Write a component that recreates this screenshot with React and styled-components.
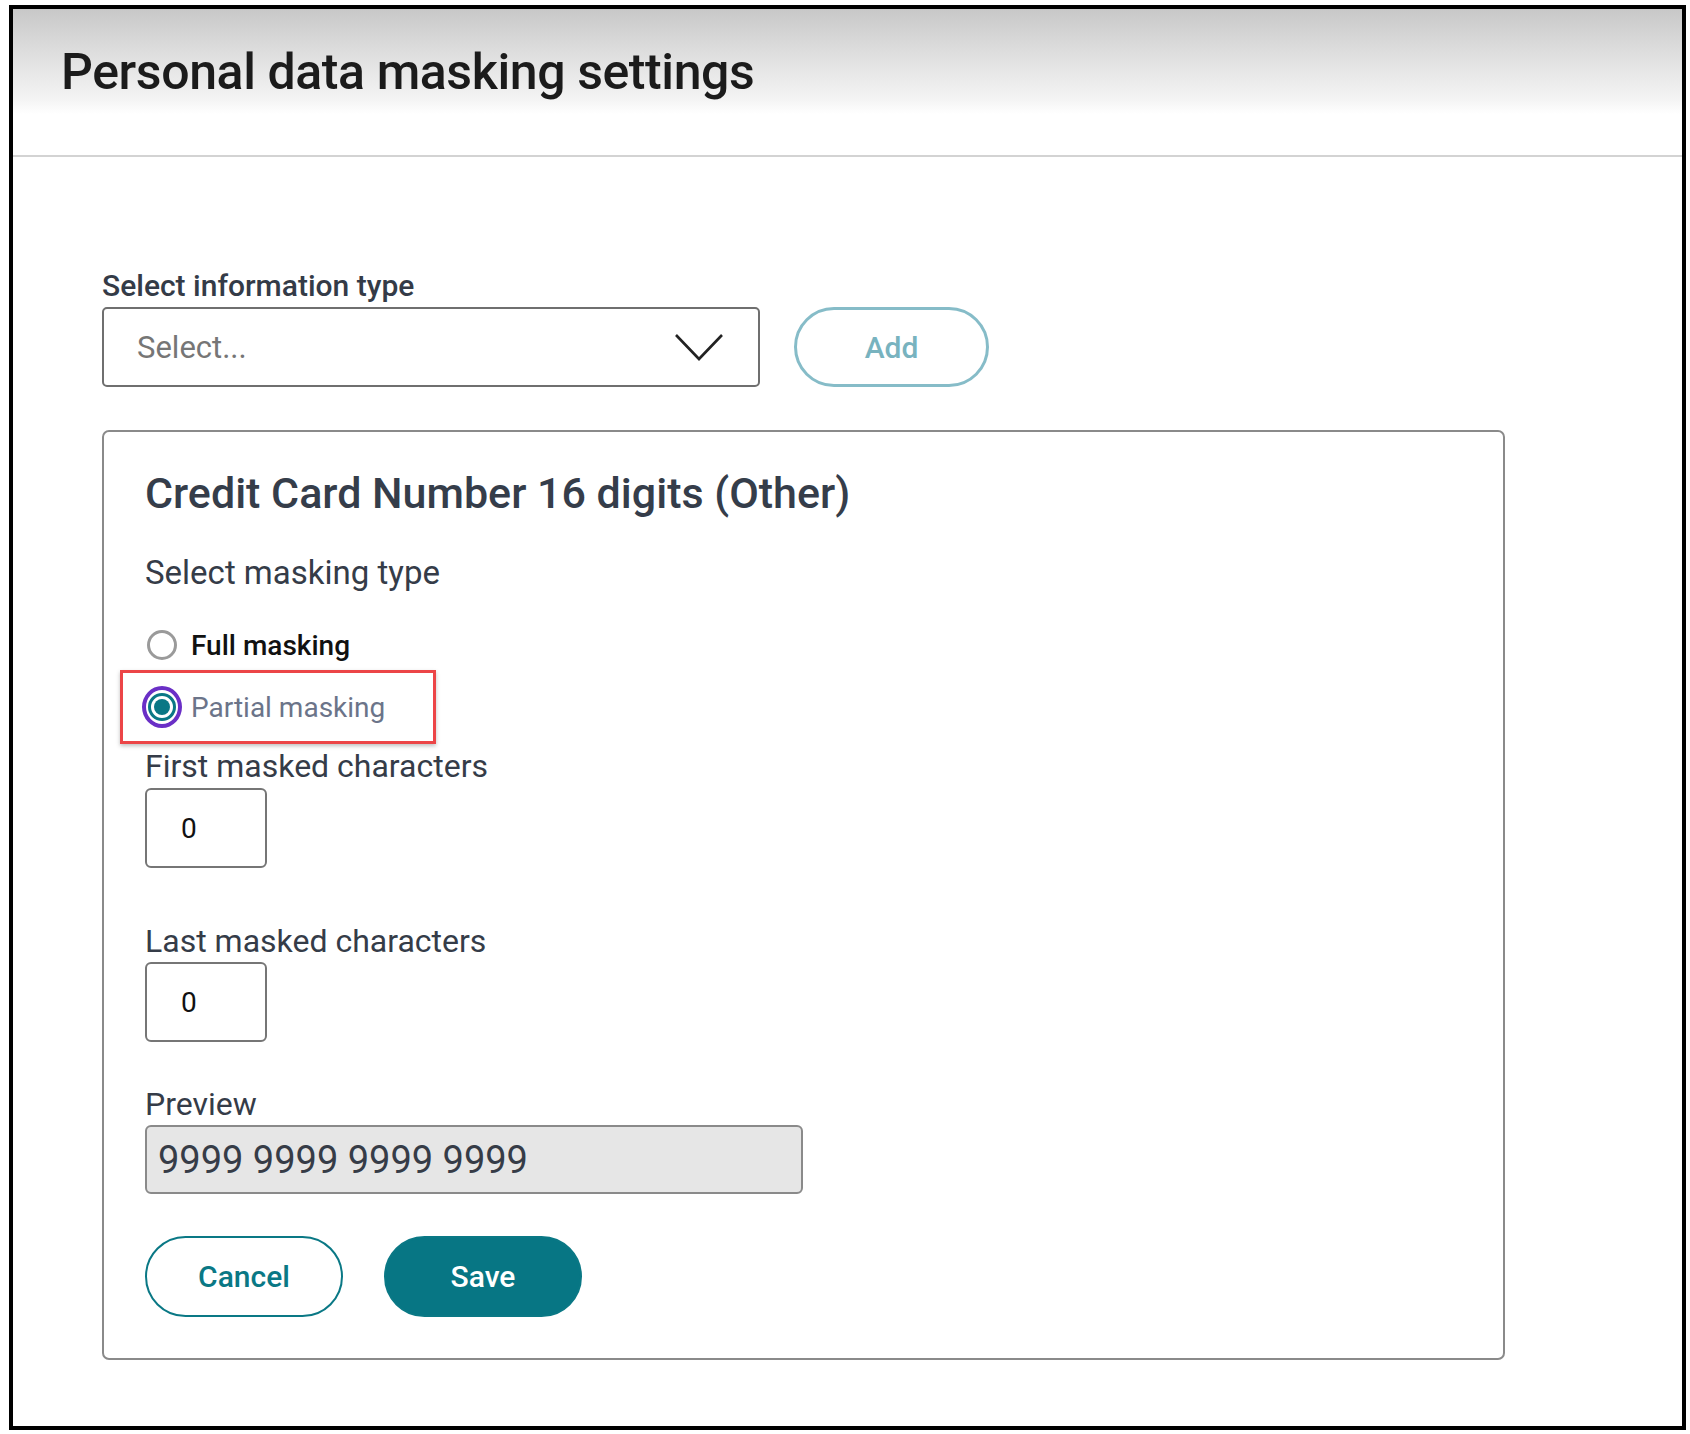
import React from "react";
import styled, { createGlobalStyle } from "styled-components";

const GlobalStyle = createGlobalStyle`
  html, body { margin: 0; padding: 0; background: #ffffff; }
  body { font-family: Roboto, "Liberation Sans", Arial, sans-serif; }
  * { box-sizing: border-box; }
`;

const Frame = styled.div`
  margin: 5px 0 0 9px;
  width: 1677px;
  height: 1425px;
  border: 4px solid #000;
  background: #fff;
  display: flex;
  flex-direction: column;
`;

const Header = styled.header`
  height: 148px;
  flex: none;
  display: flex;
  align-items: center;
  padding: 0 0 20px 48px;
  background: linear-gradient(180deg, #c8c8c8 0%, #dedede 30%, #f4f4f4 62%, #ffffff 72%, #ffffff 100%);
  border-bottom: 2px solid #d3d3d3;
`;

const Title = styled.h1`
  margin: 0;
  font-size: 50px;
  font-weight: 500;
  color: #1b1b1b;
  letter-spacing: -0.4px;
`;

const Content = styled.main`
  padding: 111px 0 0 89px;
  display: flex;
  flex-direction: column;
  align-items: flex-start;
`;

const FieldLabel = styled.label`
  display: block;
  font-size: ${(p) => p.$size || 28}px;
  line-height: 36px;
  font-weight: ${(p) => p.$weight || 400};
  color: #343b47;
  margin-top: ${(p) => p.$mt || 0}px;
`;

const SelectRow = styled.div`
  display: flex;
  align-items: center;
  gap: 34px;
  margin-top: 3px;
`;

const SelectBox = styled.div`
  width: 658px;
  height: 80px;
  border: 2px solid #6f6f6f;
  border-radius: 5px;
  display: flex;
  align-items: center;
  justify-content: space-between;
  padding: 0 34px 0 33px;
  font-size: 31px;
  color: #767676;
`;

const PillButton = styled.button`
  width: ${(p) => p.$w || 198}px;
  height: ${(p) => p.$h || 81}px;
  border-radius: 999px;
  font-family: inherit;
  font-size: 30px;
  font-weight: 500;
  cursor: pointer;
  border: ${(p) => (p.$variant === "light" ? "3px solid #86bcc8" : "2px solid #0a7885")};
  background: ${(p) => (p.$variant === "solid" ? "#077684" : "#fff")};
  color: ${(p) =>
    p.$variant === "solid" ? "#ffffff" : p.$variant === "light" ? "#78b3bf" : "#0a7885"};
`;

const Card = styled.section`
  margin-top: 43px;
  width: 1403px;
  border: 2px solid #8a8a8a;
  border-radius: 7px;
  padding: 36px 0 41px 41px;
  display: flex;
  flex-direction: column;
  align-items: flex-start;
`;

const CardTitle = styled.h2`
  margin: 0;
  font-size: 43px;
  line-height: 50px;
  font-weight: 500;
  color: #353d4a;
`;

const SubLabel = styled.div`
  font-size: ${(p) => p.$size || 32}px;
  line-height: 40px;
  color: #353c48;
  margin-top: ${(p) => p.$mt || 0}px;
`;

const RadioRow = styled.div`
  display: flex;
  align-items: center;
  height: 40px;
  margin-top: ${(p) => p.$mt || 0}px;
  margin-left: -3px;
`;

const Highlight = styled.div`
  margin-top: 5px;
  margin-left: -25px;
  width: 316px;
  height: 74px;
  border: 3px solid #ec4547;
  box-shadow: 0 2px 4px rgba(0, 0, 0, 0.25);
  display: flex;
  align-items: center;
  padding-left: 19px;
`;

const RadioSlot = styled.span`
  width: 40px;
  height: 40px;
  flex: none;
  display: flex;
  align-items: center;
  justify-content: center;
`;

const RadioCircle = styled.span`
  width: 30px;
  height: 30px;
  border-radius: 50%;
  border: 3px solid #9a9a9a;
  background: #fff;
`;

const RadioFocus = styled.span`
  width: 42px;
  height: 42px;
  border-radius: 50%;
  border: 4px solid #6a2fc6;
  background: #fff;
  display: flex;
  align-items: center;
  justify-content: center;
`;

const RadioChecked = styled.span`
  width: 28px;
  height: 28px;
  border-radius: 50%;
  border: 3px solid #0a7785;
  background: #fff;
  display: flex;
  align-items: center;
  justify-content: center;
  &::after {
    content: "";
    width: 16px;
    height: 16px;
    border-radius: 50%;
    background: #0a7785;
  }
`;

const RadioText = styled.span`
  margin-left: 9px;
  font-size: 28px;
  font-weight: ${(p) => (p.$muted ? 400 : 500)};
  color: ${(p) => (p.$muted ? "#6b7489" : "#111111")};
`;

const NumberBox = styled.div`
  margin-top: ${(p) => p.$mt || 0}px;
  width: 122px;
  height: 80px;
  border: 2px solid #767676;
  border-radius: 6px;
  display: flex;
  align-items: center;
  padding-left: 34px;
  font-size: 28px;
  color: #111;
`;

const PreviewBox = styled.div`
  margin-top: 1px;
  width: 658px;
  height: 69px;
  background: #e6e6e6;
  border: 2px solid #8a8a8a;
  border-radius: 6px;
  display: flex;
  align-items: center;
  padding-left: 11px;
  font-size: 38px;
  color: #363c47;
`;

const ButtonRow = styled.div`
  margin-top: 42px;
  display: flex;
  gap: 41px;
`;

const Chevron = () => (
  <svg width="50" height="30" viewBox="0 0 50 30" aria-hidden="true">
    <polyline points="2,3 25,27 48,3" fill="none" stroke="#222" strokeWidth="2.6" />
  </svg>
);

export default function App() {
  return (
    <>
      <GlobalStyle />
      <Frame>
        <Header>
          <Title>Personal data masking settings</Title>
        </Header>
        <Content>
          <FieldLabel $weight={500} $size={30}>Select information type</FieldLabel>
          <SelectRow>
            <SelectBox>
              <span>Select...</span>
              <Chevron />
            </SelectBox>
            <PillButton $variant="light" $w={195} $h={80}>Add</PillButton>
          </SelectRow>
          <Card>
            <CardTitle>Credit Card Number 16 digits (Other)</CardTitle>
            <SubLabel $mt={35} $size={33}>Select masking type</SubLabel>
            <RadioRow $mt={32}>
              <RadioSlot>
                <RadioCircle />
              </RadioSlot>
              <RadioText>Full masking</RadioText>
            </RadioRow>
            <Highlight>
              <RadioSlot>
                <RadioFocus>
                  <RadioChecked />
                </RadioFocus>
              </RadioSlot>
              <RadioText $muted>Partial masking</RadioText>
            </Highlight>
            <SubLabel $mt={2}>First masked characters</SubLabel>
            <NumberBox $mt={2}>0</NumberBox>
            <SubLabel $mt={53}>Last masked characters</SubLabel>
            <NumberBox $mt={1}>0</NumberBox>
            <SubLabel $mt={42}>Preview</SubLabel>
            <PreviewBox>9999 9999 9999 9999</PreviewBox>
            <ButtonRow>
              <PillButton $variant="outline">Cancel</PillButton>
              <PillButton $variant="solid">Save</PillButton>
            </ButtonRow>
          </Card>
        </Content>
      </Frame>
    </>
  );
}
